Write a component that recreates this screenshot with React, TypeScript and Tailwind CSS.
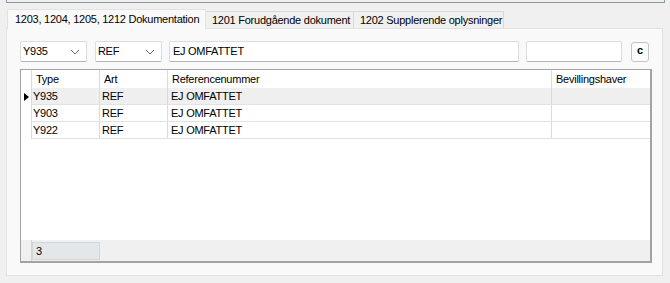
import React from 'react';

const rows = [
  { type: 'Y935', art: 'REF', ref: 'EJ OMFATTET', bev: '' },
  { type: 'Y903', art: 'REF', ref: 'EJ OMFATTET', bev: '' },
  { type: 'Y922', art: 'REF', ref: 'EJ OMFATTET', bev: '' },
];

function Chevron() {
  return (
    <svg width="10" height="6" viewBox="0 0 10 6" className="shrink-0">
      <path d="M1 1 L5 5 L9 1" fill="none" stroke="#6a6a6a" strokeWidth="1" />
    </svg>
  );
}

function Combo({ value }: { value: string }) {
  return (
    <div className="flex h-[21px] w-[67px] items-center justify-between border border-[#dcdcdc] border-b-[#b4b4b4] bg-white pl-[2px] pr-[6px] rounded-[2px]">
      <span>{value}</span>
      <Chevron />
    </div>
  );
}

export default function App() {
  return (
    <div
      className="h-[283px] w-[670px] overflow-hidden bg-[#f0f0f0] text-[11px] leading-none tracking-[-0.25px] text-black"
      style={{ fontFamily: '"Liberation Sans", Arial, sans-serif' }}
    >
      {/* panel above, bottom edge */}
      <div className="ml-[6px] h-[3px] w-[659px] border-x border-b border-[#8e98a2]" />

      {/* tabs */}
      <div className="ml-[7px] mt-[6px] flex h-[19px] items-end">
        <div className="relative z-10 -mb-px flex h-[20px] w-[199px] items-center border border-b-0 border-[#e2e2e2] bg-[#f9f9f9] pl-[7px]">
          1203, 1204, 1205, 1212 Dokumentation
        </div>
        <div className="flex h-[17px] w-[148px] items-center border border-b-0 border-l-0 border-[#d9d9d9] bg-[#f0f0f0] pl-[6px]">
          1201 Forudgående dokument
        </div>
        <div className="flex h-[17px] w-[150px] items-center border border-b-0 border-l-0 border-[#d9d9d9] bg-[#f0f0f0] pl-[6px]">
          1202 Supplerende oplysninger
        </div>
      </div>

      {/* tab page */}
      <div className="ml-[6px] h-[248px] w-[657px] border border-[#e2e2e2] bg-[#f9f9f9] px-[13px] pt-[12px]">
        <div className="flex items-center">
          <Combo value="Y935" />
          <div className="ml-[8px]">
            <Combo value="REF" />
          </div>
          <div className="ml-[7px] flex h-[21px] w-[351px] items-center rounded-[2px] border border-[#dcdcdc] border-b-[#b4b4b4] bg-white pl-[3px]">
            EJ OMFATTET
          </div>
          <div className="ml-[7px] h-[21px] w-[96px] rounded-[2px] border border-[#dcdcdc] border-b-[#b4b4b4] bg-white" />
          <button className="ml-[9px] flex h-[20px] w-[18px] items-center justify-center rounded-[3px] border border-[#c4c4c4] bg-[#fdfdfd] pb-[2px] text-[11px] font-bold">
            c
          </button>
        </div>

        {/* grid */}
        <div className="mt-[7px] flex h-[194px] w-[632px] flex-col border border-b-2 border-r-2 border-[#a3a3a3] bg-white">
          <div className="flex h-[18px] shrink-0">
            <div className="w-[11px] border-r border-[#dadada]" />
            <div className="flex w-[68px] items-center border-r border-[#dadada] pl-[4px]">Type</div>
            <div className="flex w-[68px] items-center border-r border-[#dadada] pl-[4px]">Art</div>
            <div className="flex w-[384px] items-center border-r border-[#dadada] pl-[4px]">Referencenummer</div>
            <div className="flex flex-1 items-center pl-[4px]">Bevillingshaver</div>
          </div>
          {rows.map((r, i) => (
            <div key={r.type} className="flex h-[17px] shrink-0">
              <div className="flex w-[11px] items-center justify-center border-r border-[#dadada]">
                {i === 0 && (
                  <svg width="5" height="8" viewBox="0 0 5 8">
                    <path d="M0 0 L5 4 L0 8 Z" fill="#000" />
                  </svg>
                )}
              </div>
              <div className={`flex flex-1 border-b border-[#e2e2e2] ${i === 0 ? 'bg-[#efefef]' : 'bg-white'}`}>
                <div className="flex w-[68px] items-center border-r border-[#dadada] pl-[1px]">{r.type}</div>
                <div className="flex w-[68px] items-center border-r border-[#dadada] pl-[2px]">{r.art}</div>
                <div className="flex w-[384px] items-center border-r border-[#dadada] pl-[3px]">{r.ref}</div>
                <div className="flex flex-1 items-center pl-[3px]">{r.bev}</div>
              </div>
            </div>
          ))}
          <div className="flex-1" />
          {/* status strip */}
          <div className="flex h-[21px] shrink-0 bg-[#f0f0f0]">
            <div className="w-[11px] border-r border-[#d4d4d4]" />
            <div className="mt-[2px] flex h-[18px] w-[68px] items-center border border-[#d3d6d8] bg-[#e4e7e9] pl-[3px]">
              3
            </div>
          </div>
        </div>
      </div>
    </div>
  );
}
